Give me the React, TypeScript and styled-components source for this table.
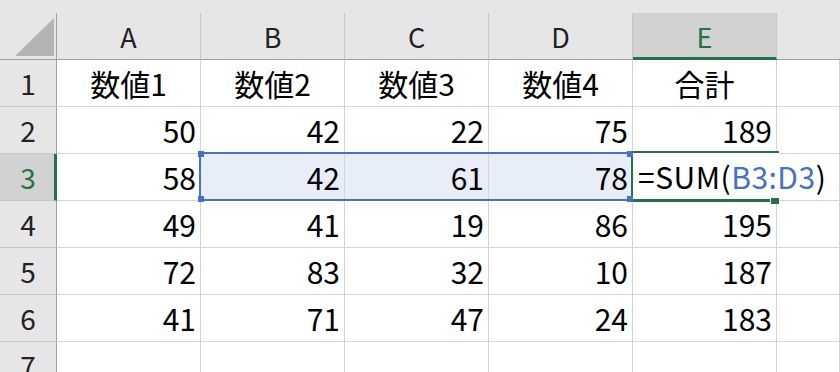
import React from 'react';
import styled, { createGlobalStyle } from 'styled-components';

const GlobalStyle = createGlobalStyle`
  *, *::before, *::after { box-sizing: border-box; }
  html, body { margin: 0; padding: 0; background: #fff; }
  body { font-family: "Noto Sans CJK JP", "Noto Sans", sans-serif; }
`;

const GREEN = '#217346';
const BLUE = '#4472c4';

const Sheet = styled.div`
  position: relative;
  width: 840px;
  height: 372px;
  overflow: hidden;
  background: #fff;
`;

const TopBand = styled.div`
  height: 13px;
  background: #e6e6e6;
`;

const Grid = styled.div`
  display: grid;
  grid-template-columns: 57px repeat(5, 144px) 1fr;
  grid-auto-rows: 47px;
`;

const Corner = styled.div`
  display: flex;
  align-items: flex-end;
  justify-content: flex-end;
  padding: 0 2px 3px 0;
  background: #e6e6e6;
  border-right: 1px solid #a0a0a0;
  border-bottom: 1px solid #a0a0a0;
`;

const CornerTriangle = styled.div`
  width: 39px;
  height: 38px;
  background: #b4b4b4;
  clip-path: polygon(100% 0, 100% 100%, 0 100%);
`;

const ColHeader = styled.div<{ $active?: boolean; $last?: boolean }>`
  display: flex;
  align-items: center;
  justify-content: center;
  background: ${(p) => (p.$active ? '#d2d2d2' : '#e6e6e6')};
  color: ${(p) => (p.$active ? GREEN : '#222')};
  border-right: ${(p) => (p.$last ? 'none' : '1px solid #c6c6c6')};
  border-bottom: ${(p) => (p.$active ? `3px solid ${GREEN}` : '1px solid #a0a0a0')};
  padding-top: ${(p) => (p.$active ? '2px' : '0')};
  font-size: 27px;
  line-height: 1;
`;

const RowHeader = styled.div<{ $active?: boolean }>`
  display: flex;
  align-items: center;
  justify-content: center;
  background: ${(p) => (p.$active ? '#d2d2d2' : '#e6e6e6')};
  color: ${(p) => (p.$active ? GREEN : '#222')};
  border-right: ${(p) => (p.$active ? `3px solid ${GREEN}` : '1px solid #a0a0a0')};
  border-bottom: 1px solid #c6c6c6;
  padding-left: ${(p) => (p.$active ? '2px' : '0')};
  font-size: 28px;
  line-height: 1;
`;

const Cell = styled.div<{ $align: 'right' | 'center'; $selected?: boolean }>`
  display: flex;
  align-items: center;
  justify-content: ${(p) => (p.$align === 'right' ? 'flex-end' : 'center')};
  padding: 0 4px;
  background: ${(p) => (p.$selected ? '#e8eef8' : '#fff')};
  border-right: 1px solid #d4d4d4;
  border-bottom: 1px solid #d4d4d4;
  color: #000;
  font-size: 30px;
  line-height: 1;
  white-space: nowrap;
`;

/* Range reference highlight (B3:D3), drawn over the grid */
const SelectionBox = styled.div`
  position: absolute;
  z-index: 2;
  left: 199px;
  top: 152px;
  width: 434px;
  height: 49px;
  border: 2px solid ${BLUE};
  border-right-color: transparent;
  pointer-events: none;
`;

const RangeHandle = styled.div<{ $v: 'top' | 'bottom'; $h: 'left' | 'right' }>`
  position: absolute;
  ${(p) => p.$v}: -3px;
  ${(p) => p.$h}: ${(p) => (p.$h === 'left' ? '-3px' : '-2px')};
  width: 6px;
  height: 6px;
  background: ${BLUE};
`;

/* In-cell editor of E3, drawn over the grid */
const Editor = styled.div`
  position: absolute;
  z-index: 1;
  left: 631px;
  top: 151px;
  width: 148px;
  height: 51px;
  display: flex;
  align-items: center;
  padding-left: 5px;
  background: #fff;
  border-top: 2px solid ${GREEN};
  border-bottom: 3px solid ${GREEN};
  border-left: 2px solid ${GREEN};
  color: #000;
  font-size: 30px;
  line-height: 1;
  letter-spacing: 0.5px;
  white-space: nowrap;
`;

const Ref = styled.span`
  color: ${BLUE};
`;

const FillHandle = styled.div`
  position: absolute;
  right: 0;
  bottom: -5px;
  width: 8px;
  height: 6px;
  background: ${GREEN};
  box-shadow: -1px 0 0 #fff;
`;

const columns = ['A', 'B', 'C', 'D', 'E'];

type Row = { n: number; cells: (string | number | null)[] };

const rows: Row[] = [
  { n: 1, cells: ['数値1', '数値2', '数値3', '数値4', '合計'] },
  { n: 2, cells: [50, 42, 22, 75, 189] },
  { n: 3, cells: [58, 42, 61, 78, null] },
  { n: 4, cells: [49, 41, 19, 86, 195] },
  { n: 5, cells: [72, 83, 32, 10, 187] },
  { n: 6, cells: [41, 71, 47, 24, 183] },
  { n: 7, cells: [null, null, null, null, null] },
];

export default function App() {
  return (
    <>
      <GlobalStyle />
      <Sheet>
        <TopBand />
        <Grid>
          <Corner>
            <CornerTriangle />
          </Corner>
          {columns.map((c) => (
            <ColHeader key={c} $active={c === 'E'}>
              {c}
            </ColHeader>
          ))}
          <ColHeader $last />
          {rows.map((r) => (
            <React.Fragment key={r.n}>
              <RowHeader $active={r.n === 3}>{r.n}</RowHeader>
              {r.cells.map((v, i) => (
                <Cell
                  key={i}
                  $align={typeof v === 'number' ? 'right' : 'center'}
                  $selected={r.n === 3 && i >= 1 && i <= 3}
                >
                  {v}
                </Cell>
              ))}
              <Cell $align="center" />
            </React.Fragment>
          ))}
        </Grid>
        <SelectionBox>
          <RangeHandle $v="top" $h="left" />
          <RangeHandle $v="bottom" $h="left" />
          <RangeHandle $v="top" $h="right" />
          <RangeHandle $v="bottom" $h="right" />
        </SelectionBox>
        <Editor>
          =SUM(<Ref>B3:D3</Ref>)
          <FillHandle />
        </Editor>
      </Sheet>
    </>
  );
}
